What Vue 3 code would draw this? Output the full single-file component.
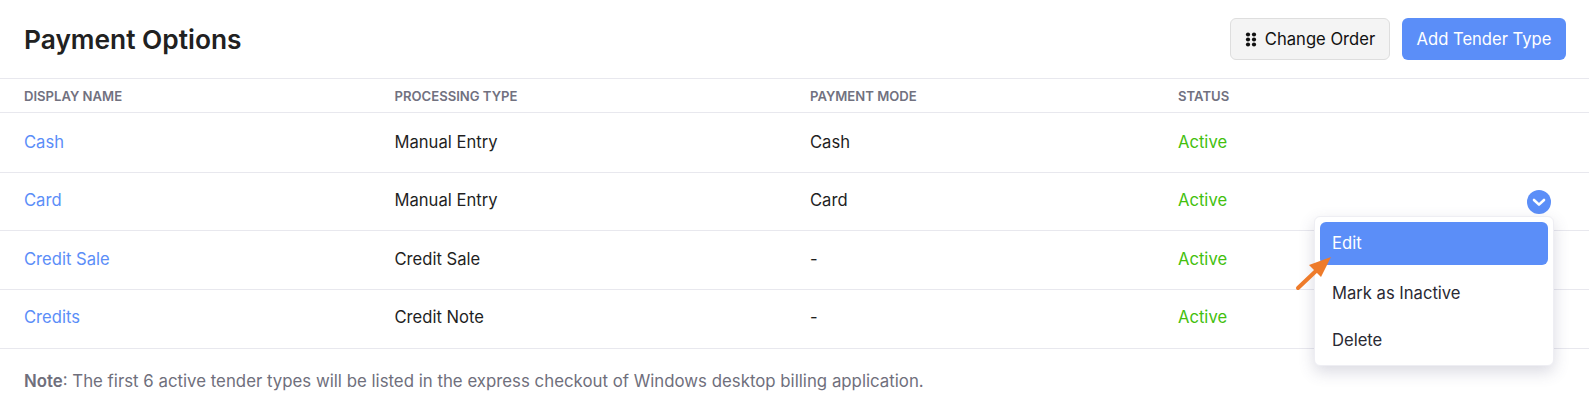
<template>
  <div class="page">
    <header class="top">
      <h1>Payment Options</h1>
      <div class="actions">
        <button class="btn btn-light">
          <svg width="12" height="15" viewBox="0 0 12 15" fill="#111">
            <circle v-for="d in dots" :key="d.join()" :cx="d[0]" :cy="d[1]" r="2.1" />
          </svg>
          Change Order
        </button>
        <button class="btn btn-primary">Add Tender Type</button>
      </div>
    </header>

    <div class="row head">
      <div>DISPLAY NAME</div>
      <div>PROCESSING TYPE</div>
      <div>PAYMENT MODE</div>
      <div>STATUS</div>
    </div>

    <div class="row item" v-for="(row, index) in rows" :key="row.name">
      <div class="name">{{ row.name }}</div>
      <div>{{ row.type }}</div>
      <div>{{ row.mode }}</div>
      <div class="status">Active</div>
      <div class="more" v-if="index === 1">
        <span class="toggle">
          <svg width="14" height="9" viewBox="0 0 14 9" fill="none" stroke="#fff" stroke-width="2.6" stroke-linecap="round" stroke-linejoin="round">
            <path d="M2 2l5 4.6L12 2" />
          </svg>
        </span>
        <div class="menu">
          <div class="menu-item active">Edit</div>
          <div class="menu-item">Mark as Inactive</div>
          <div class="menu-item">Delete</div>
        </div>
        <svg class="arrow" width="40" height="38" viewBox="0 0 40 38">
          <path d="M3 35 22 17" stroke="#ee7b2a" stroke-width="4" stroke-linecap="round" />
          <path d="M36 4 14 12l12 12z" fill="#ee7b2a" />
        </svg>
      </div>
    </div>

    <p class="note"><b>Note</b>: The first 6 active tender types will be listed in the express checkout of Windows desktop billing application.</p>
  </div>
</template>

<script setup>
const dots = [
  [3, 2.5], [9, 2.5],
  [3, 7.5], [9, 7.5],
  [3, 12.5], [9, 12.5],
];

const rows = [
  { name: 'Cash', type: 'Manual Entry', mode: 'Cash' },
  { name: 'Card', type: 'Manual Entry', mode: 'Card' },
  { name: 'Credit Sale', type: 'Credit Sale', mode: '-' },
  { name: 'Credits', type: 'Credit Note', mode: '-' },
];
</script>

<style>
body {
  background: #fff;
}
</style>

<style scoped>
.page {
  font-family: Inter, "Liberation Sans", sans-serif;
  color: #1f1f1f;
  font-size: 16.6px;
  height: 420px;
  overflow: hidden;
}

.top {
  display: flex;
  align-items: center;
  justify-content: space-between;
  height: 78px;
  padding: 0 23px 0 24px;
  border-bottom: 1px solid #e8e8ee;
}

h1 {
  margin: 0;
  font-size: 26.3px;
  font-weight: 600;
  color: #212121;
}

.actions {
  display: flex;
  gap: 12px;
}

.btn {
  display: flex;
  align-items: center;
  justify-content: center;
  gap: 8px;
  height: 42px;
  padding: 0;
  border-radius: 6px;
  font: inherit;
  font-weight: 400;
}

.btn-light {
  width: 160px;
  background: #f4f4f4;
  border: 1px solid #dedede;
  color: #111;
}

.btn-primary {
  width: 164px;
  background: #5b8ef8;
  border: 0;
  color: #fff;
}

.row {
  display: grid;
  grid-template-columns: 370.5px 415.5px 368px 1fr;
  align-items: center;
  padding-left: 24px;
  border-bottom: 1px solid #e8e8ee;
}

.head {
  box-sizing: border-box;
  height: 34px;
  padding-top: 1px;
  font-size: 13.1px;
  font-weight: 600;
  color: #71717f;
}

.item {
  height: 56px;
  padding-bottom: 2px;
  position: relative;
}

.head + .item {
  height: 57px;
}

.head + .item + .item {
  height: 54px;
  padding-bottom: 3px;
}

.item:last-of-type {
  height: 54px;
  padding-bottom: 4px;
}

.name {
  color: #5b8ef8;
}

.status {
  color: #43c00d;
}

.more {
  position: absolute;
  top: 0;
  left: 0;
  width: 100%;
  height: 100%;
}

.toggle {
  position: absolute;
  top: 17px;
  left: 1527px;
  width: 24px;
  height: 24px;
  border-radius: 50%;
  background: #5b8ef8;
  display: flex;
  align-items: center;
  justify-content: center;
}

.menu {
  position: absolute;
  top: 43px;
  left: 1314px;
  width: 240px;
  box-sizing: border-box;
  padding: 5px;
  height: 150px;
  background: #fff;
  border-radius: 6px;
  border: 1px solid #eeeef3;
  box-shadow: 0 6px 16px rgba(70, 70, 110, 0.2);
  z-index: 2;
}

.menu-item {
  height: 47px;
  padding-left: 12px;
  display: flex;
  align-items: center;
  color: #2a2a33;
}

.menu-item.active {
  height: 43px;
  margin-bottom: 4px;
  padding-bottom: 1px;
  box-sizing: border-box;
  background: #5b8ef8;
  color: #fff;
  border-radius: 6px;
}

.arrow {
  position: absolute;
  top: 80px;
  left: 1295px;
  z-index: 3;
}

.note {
  margin: 0;
  padding: 22px 24px 0;
  font-size: 16.82px;
  color: #6f6f7c;
}

.note b {
  font-weight: 600;
}
</style>
